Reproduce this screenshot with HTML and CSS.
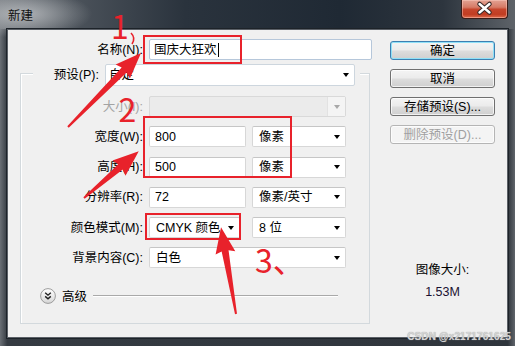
FILE: index.html
```html
<!DOCTYPE html>
<html lang="zh-CN">
<head>
  <meta charset="UTF-8" />
  <title>新建</title>
  <link rel="stylesheet" href="styles.css">
</head>
<body>
  <div class="window">
    <div class="titlebar">
      <span class="title">新建</span>
      <div class="close">
        <svg width="47" height="19" viewBox="0 0 47 19">
          <path d="M18.5 5 L28.5 13.5 M28.5 5 L18.5 13.5" stroke="#3a2a28" stroke-width="4.5" stroke-linecap="round"/>
          <path d="M18.5 5 L28.5 13.5 M28.5 5 L18.5 13.5" stroke="#fff" stroke-width="2.4" stroke-linecap="round"/>
        </svg>
      </div>
    </div>

    <div class="client">
      <div class="form">
        <div class="name-row">
          <label class="lbl">名称(N):</label>
          <div class="field name-field">国庆大狂欢<span class="caret"></span></div>
        </div>

        <div class="group">
          <div class="preset-row">
            <label class="lbl">预设(P):</label>
            <div class="select preset-select"><span>自定</span><i class="arrow"></i></div>
          </div>

          <div class="rows">
            <div class="row">
              <label class="lbl disabled">大小(I):</label>
              <div class="select wide select-off"><span></span><b class="off-part"><i class="arrow grey"></i></b></div>
            </div>
            <div class="row">
              <label class="lbl">宽度(W):</label>
              <div class="field value">800</div>
              <div class="select unit"><span>像素</span><i class="arrow"></i></div>
            </div>
            <div class="row">
              <label class="lbl">高度(H):</label>
              <div class="field value">500</div>
              <div class="select unit"><span>像素</span><i class="arrow"></i></div>
            </div>
            <div class="row">
              <label class="lbl">分辨率(R):</label>
              <div class="field value">72</div>
              <div class="select unit"><span>像素/英寸</span><i class="arrow"></i></div>
            </div>
            <div class="row">
              <label class="lbl">颜色模式(M):</label>
              <div class="select mode"><span>CMYK 颜色</span><i class="arrow"></i></div>
              <div class="select unit"><span>8 位</span><i class="arrow"></i></div>
            </div>
            <div class="row">
              <label class="lbl">背景内容(C):</label>
              <div class="select wide"><span>白色</span><i class="arrow"></i></div>
            </div>
          </div>

          <div class="advanced">
            <svg class="adv-icon" width="16" height="16" viewBox="0 0 16 16">
              <defs>
                <linearGradient id="advg" x1="0" y1="0" x2="0" y2="1">
                  <stop offset="0" stop-color="#ffffff"/>
                  <stop offset="1" stop-color="#d6d6d6"/>
                </linearGradient>
              </defs>
              <circle cx="8" cy="8" r="7.4" fill="url(#advg)" stroke="#9c9c9c" stroke-width="1"/>
              <polyline points="5.2,4.8 8,7.2 10.8,4.8" fill="none" stroke="#1e1e1e" stroke-width="1.4"/>
              <polyline points="5.2,8.4 8,10.8 10.8,8.4" fill="none" stroke="#1e1e1e" stroke-width="1.4"/>
            </svg>
            <span>高级</span>
            <div class="adv-line"></div>
          </div>
        </div>
      </div>

      <div class="side">
        <div class="btn default">确定</div>
        <div class="btn">取消</div>
        <div class="btn">存储预设(S)...</div>
        <div class="btn off">删除预设(D)...</div>
        <div class="size-info">
          <div>图像大小:</div>
          <div class="size-value">1.53M</div>
        </div>
      </div>
    </div>

    <div class="watermark">CSDN @x2171761625</div>

    <svg class="marks" width="515" height="346" viewBox="0 0 515 346">
      <g fill="none" stroke="#e8222b" stroke-width="2">
        <rect x="144" y="36" width="97" height="27"/>
        <rect x="144" y="117" width="147" height="60"/>
        <rect x="146" y="214" width="94" height="25"/>
        <path d="M131 33 Q136 38 132 44" stroke-width="1.6"/>
      </g>
      <g fill="#e8222b">
        <polygon transform="translate(68 127) rotate(-45.4)" points="0,-1 80,-3.5 78,-10 104,0 78,10 80,3.5 0,1"/>
        <polygon transform="translate(84 198) rotate(-40.5)" points="0,-1 48,-3.5 46,-10 72,0 46,10 48,3.5 0,1"/>
        <polygon transform="translate(236 314) rotate(-99.8)" points="0,-1 64,-3.5 62,-10 88,0 62,10 64,3.5 0,1"/>
        <text class="mark-num" x="120" y="39" text-anchor="middle">1</text>
        <text class="mark-num" x="127.5" y="122" text-anchor="middle">2</text>
        <text class="mark-num" x="255" y="273">3、</text>
      </g>
    </svg>
  </div>
</body>
</html>
```

FILE: styles.css
```css
* {
  box-sizing: border-box;
}

body {
  margin: 0;
  font-family: "Liberation Sans", "Noto Sans CJK SC", sans-serif;
  font-size: 12.5px;
  color: #000;
}

.window {
  position: relative;
  width: 515px;
  height: 346px;
  display: flex;
  flex-direction: column;
  padding: 0 7px 8px;
  overflow: hidden;
  background:
    radial-gradient(ellipse 70px 24px at 22px 14px, rgba(190, 193, 196, 0.85), rgba(190, 193, 196, 0)),
    linear-gradient(to right, #72777d 0%, #4c535b 14%, #2a333d 36%, #1f2934 66%, #2d353e 86%, #5e6369 100%) top / 100% 29px no-repeat,
    linear-gradient(to right, #6a6f75 0%, #353b42 1.4%, #2f353c 98.6%, #60656b 100%);
}

.titlebar {
  height: 29px;
  flex: none;
  display: flex;
  justify-content: space-between;
  align-items: flex-start;
}

.title {
  margin: 6px 0 0 1px;
  font-family: "Noto Sans CJK SC", sans-serif;
  font-size: 12.5px;
  line-height: 17px;
  color: #111;
}

.close {
  width: 47px;
  height: 19px;
  border: 1px solid #3b1c17;
  border-top: none;
  border-radius: 0 0 4px 4px;
  background: linear-gradient(#e3a293 0%, #d67b66 40%, #c6452c 52%, #c23d22 80%, #de6b4c 100%);
  box-shadow: inset 0 0 0 1px rgba(255, 210, 200, 0.45);
}

.close svg {
  display: block;
  margin: -1px 0 0 -1px;
}

.client {
  flex: 1;
  display: flex;
  background: #f0f0f0;
  border: 1px solid #5b6067;
  box-shadow: 0 0 0 1px #1d2329;
}

/* left column */
.form {
  width: 364px;
  padding-left: 12px;
}

.lbl {
  text-align: right;
  white-space: nowrap;
  line-height: 16px;
}

.lbl.disabled {
  color: #a3a3a3;
}

.name-row {
  margin-top: 9px;
  height: 21px;
  display: flex;
  align-items: center;
  gap: 6px;
}

.name-row .lbl {
  width: 123px;
}

.field,
.select {
  height: 21px;
  display: flex;
  align-items: center;
  background: #fff;
  border: 1px solid #d7d7d7;
  border-top-color: #c6c6c6;
  border-radius: 2px;
  white-space: nowrap;
  line-height: 16px;
}

.field {
  padding-left: 5px;
}

.select {
  padding: 0 5px 0 6px;
}

.name-field {
  width: 223px;
  padding-left: 4px;
  border-color: #b6c7da;
}

.caret {
  width: 1px;
  height: 14px;
  margin-left: 1px;
  background: #000;
}

.arrow {
  margin-left: auto;
  width: 0;
  height: 0;
  border-left: 3.5px solid transparent;
  border-right: 3.5px solid transparent;
  border-top: 4px solid #000;
}

.arrow.grey {
  border-top-color: #a8a8a8;
}

.group {
  margin-top: 13px;
  width: 350px;
  height: 251px;
  border: 1px solid #d3d9dd;
  box-shadow: inset 1px 1px 0 #fff;
}

.preset-row {
  margin: -10px 9px 0 12px;
  padding-right: 5px;
  display: flex;
  align-items: center;
  gap: 6px;
  background: #f0f0f0;
}

.preset-row .lbl {
  width: 66px;
}

.preset-select {
  width: 250px;
  height: 22px;
  padding-left: 3px;
  border-color: #cdd6de;
}

.rows {
  margin-top: 10px;
  display: flex;
  flex-direction: column;
  gap: 9.3px;
}

.row {
  height: 21px;
  display: flex;
  align-items: center;
  gap: 6px;
}

.row .lbl {
  width: 122px;
}

.wide {
  width: 197px;
}

.value {
  width: 97px;
}

.unit {
  width: 94px;
}

.mode {
  width: 91px;
  margin-right: 6px;
}

.select-off {
  padding: 0;
  background: #ebebeb;
  border-color: #d9d9d9;
}

.off-part {
  margin-left: auto;
  width: 18px;
  height: 100%;
  display: flex;
  align-items: center;
  padding-right: 5px;
  background: #f4f4f4;
  border-left: 1px solid #e2e2e2;
}

.advanced {
  margin-top: 19.5px;
  padding-left: 19px;
  height: 16px;
  display: flex;
  align-items: center;
}

.adv-icon {
  display: block;
  margin-right: 6px;
}

.adv-line {
  margin-left: 6px;
  width: 245px;
  height: 1px;
  background: #a9a9a9;
  box-shadow: 0 1px 0 #fff;
}

/* right column */
.side {
  margin-left: 18px;
  width: 105px;
  padding-top: 11px;
  display: flex;
  flex-direction: column;
  gap: 9px;
}

.btn {
  height: 19px;
  display: flex;
  align-items: center;
  justify-content: center;
  line-height: 16px;
  border: 1px solid #707070;
  border-radius: 3px;
  background: linear-gradient(#f4f4f4 0%, #ebebeb 48%, #dddddd 52%, #cfcfcf 100%);
  box-shadow: inset 0 0 0 1px rgba(255, 255, 255, 0.7);
}

.btn.default {
  border-color: #3c7fb1;
  box-shadow: inset 0 0 0 1px #8fe0f7;
}

.btn.off {
  color: #a0a0a0;
  border-color: #b5b5b5;
  background: #f4f4f4;
}

.size-info {
  margin-top: 109px;
  text-align: center;
  line-height: 16px;
}

.size-value {
  margin-top: 6px;
  color: #1a1030;
}

/* overlays */
.watermark {
  position: absolute;
  right: 4px;
  bottom: 4px;
  font-family: "Liberation Sans", sans-serif;
  font-size: 10px;
  font-weight: bold;
  color: #d4d4d4;
  text-shadow: 0 0 1px #9a9a9a;
  letter-spacing: 0.1px;
}

.marks {
  position: absolute;
  left: 0;
  top: 0;
  pointer-events: none;
}

.mark-num {
  font-family: "Noto Sans CJK SC", sans-serif;
  font-size: 32px;
}
```
